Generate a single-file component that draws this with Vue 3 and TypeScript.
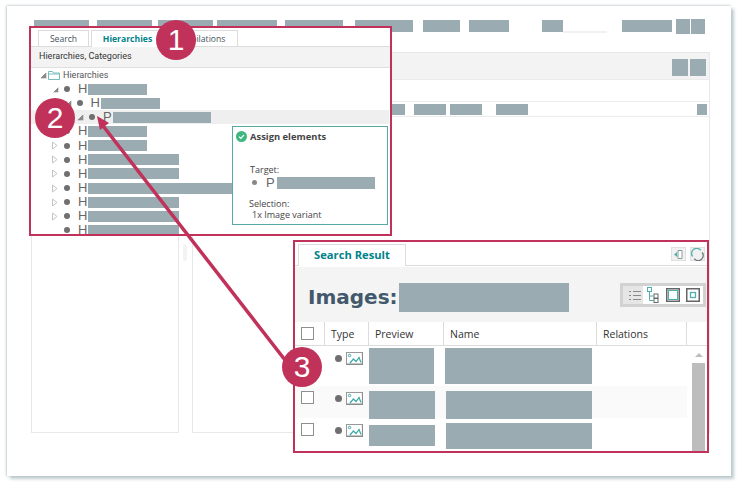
<template>
  <div class="page">
    <div class="window">
      <div class="toolbar">
        <span
          v-for="(b, i) in toolbarBlocks"
          :key="i"
          class="mask"
          :class="{ tall: b.tall }"
          :style="{ width: b.w + 'px', marginLeft: b.gap + 'px' }"
        ></span>
        <span class="slider-line"></span>
      </div>

      <div class="main">
        <div class="left-panel"></div>
        <div class="splitter"><i></i></div>
        <div class="right-panel">
          <div class="panel-head">
            <span class="mask head-btn"></span>
            <span class="mask head-btn"></span>
          </div>
          <div class="panel-spacer"></div>
          <div class="panel-cols">
            <span
              v-for="(c, i) in colBlocks"
              :key="i"
              class="mask"
              :style="{ width: c.w + 'px', marginLeft: c.gap + 'px' }"
            ></span>
          </div>
        </div>
      </div>
    </div>

    <!-- callout 1: tree -->
    <section class="callout tree-callout">
      <div class="tabs">
        <span class="tab search-tab">Search</span>
        <span class="tab active">Hierarchies</span>
        <span class="tab comp-tab">Compilations</span>
      </div>
      <div class="bar">Hierarchies, Categories</div>
      <div class="tree">
        <div class="tree-root">
          <span class="arrow open"></span>
          <svg class="folder" width="12" height="10" viewBox="0 0 12 10">
            <path d="M.5 9.5V1.5h4l1 1.5h6v6.5z" fill="#fff" stroke="#79bcbc" />
            <path d="M.5 4h11" stroke="#79bcbc" />
          </svg>
          <span>Hierarchies</span>
        </div>
        <div
          v-for="(r, i) in treeRows"
          :key="i"
          class="tree-row"
          :class="{ selected: r.selected }"
          :style="{ paddingLeft: r.indent + 'px' }"
        >
          <svg v-if="r.arrow === 'closed'" class="arrow" width="7" height="9" viewBox="0 0 7 9">
            <path d="M.5 1v7l4.5-3.5z" fill="#fff" stroke="#c4c4c4" />
          </svg>
          <span v-else class="arrow" :class="r.arrow"></span>
          <span class="dot"></span>
          <span class="letter">{{ r.letter }}</span>
          <span class="mask row-mask" :style="{ width: r.w + 'px' }"></span>
        </div>
      </div>

      <div class="assign">
        <div class="assign-title">
          <svg width="11" height="11" viewBox="0 0 11 11">
            <circle cx="5.5" cy="5.5" r="5.5" fill="#3fb77f" />
            <path d="M3 5.6l1.8 1.8L8 3.9" fill="none" stroke="#fff" stroke-width="1.3" />
          </svg>
          <b>Assign elements</b>
        </div>
        <div class="assign-label target">Target:</div>
        <div class="assign-target">
          <span class="dot"></span>
          <span class="letter">P</span>
          <span class="mask"></span>
        </div>
        <div class="assign-label selection">Selection:</div>
        <div class="assign-label variant">1x Image variant</div>
      </div>
    </section>

    <!-- callout 2: search result -->
    <section class="callout result-callout">
      <div class="result-tabs">
        <span class="result-tab">Search Result</span>
        <span class="tool-btn">
          <svg width="11" height="11" viewBox="0 0 11 11">
            <path d="M5 1.5h4v8H5z" fill="#fff" stroke="#8a9a9c" />
            <path d="M1 5.5l3-2.5v5z" fill="#4fb0ae" />
          </svg>
        </span>
        <span class="tool-btn second">
          <svg width="13" height="13" viewBox="0 0 13 13">
            <path d="M1.6 8.5A5 5 0 0 1 9.8 2.4" fill="none" stroke="#4fb0ae" stroke-width="1.3" />
            <path d="M11.2 4.5A5 5 0 0 1 3.2 10.6" fill="none" stroke="#6d7678" stroke-width="1.3" />
          </svg>
        </span>
      </div>
      <div class="result-head">
        <h1>Images:</h1>
        <span class="mask title-mask"></span>
        <div class="view-switch">
          <span class="view selected">
            <svg width="12" height="11" viewBox="0 0 12 11">
              <path d="M0 1.5h2M4 1.5h8M0 5.5h2M4 5.5h8M0 9.5h2M4 9.5h8" stroke="#8a8a8a" stroke-width="1.2" />
            </svg>
          </span>
          <span class="view">
            <svg width="12" height="16" viewBox="0 0 12 16">
              <rect x=".5" y=".5" width="4" height="4" fill="#fff" stroke="#4fb0ae" />
              <path d="M2.5 4.5v9h4M2.5 9h4" fill="none" stroke="#4fb0ae" />
              <rect x="7" y="7" width="4" height="4" fill="#fff" stroke="#666" />
              <rect x="7" y="11.5" width="4" height="4" fill="#fff" stroke="#666" />
            </svg>
          </span>
          <span class="view">
            <svg width="14" height="14" viewBox="0 0 14 14">
              <rect x=".75" y=".75" width="12.5" height="12.5" fill="#fff" stroke="#666" stroke-width="1.5" />
              <rect x="2.5" y="2.5" width="9" height="9" fill="#fff" stroke="#4fb0ae" />
            </svg>
          </span>
          <span class="view">
            <svg width="14" height="14" viewBox="0 0 14 14">
              <rect x=".75" y=".75" width="12.5" height="12.5" fill="#fff" stroke="#666" stroke-width="1.5" />
              <rect x="4.5" y="4.5" width="5" height="5" fill="#fff" stroke="#4fb0ae" stroke-width="1.3" />
            </svg>
          </span>
        </div>
      </div>

      <div class="table-head">
        <span class="th check-cell"><span class="checkbox"></span></span>
        <span class="th type-cell">Type</span>
        <span class="th preview-cell">Preview</span>
        <span class="th name-cell">Name</span>
        <span class="th rel-cell">Relations</span>
      </div>

      <div class="table-body">
        <div class="rows">
          <div
            v-for="(row, i) in resultRows"
            :key="i"
            class="row"
            :class="{ striped: i === 1 }"
            :style="{ height: row.h + 'px' }"
          >
            <span class="check-cell">
              <span v-if="row.check" class="checkbox" :style="{ marginTop: row.checkTop + 'px' }"></span>
            </span>
            <span class="type-cell type-icons" :style="{ marginTop: row.iconTop + 'px' }">
              <span class="dot big"></span>
              <svg width="17" height="13" viewBox="0 0 17 13">
                <rect x=".5" y=".5" width="16" height="12" fill="#fff" stroke="#999" />
                <path d="M.5 12.3h16.2V.5" fill="none" stroke="#8a8a8a" stroke-width="1.6" />
                <circle cx="3.5" cy="3.5" r="1.2" fill="none" stroke="#3aa9a9" />
                <path d="M4 11l3.5-4 2.5 2.5L13 5.5l2 5" fill="none" stroke="#3aa9a9" stroke-width="1.2" />
              </svg>
            </span>
            <span class="preview-cell">
              <span
                class="mask"
                :style="{ width: row.pw + 'px', height: row.ph + 'px', marginTop: row.pt + 'px' }"
              ></span>
            </span>
            <span class="name-cell">
              <span
                class="mask"
                :style="{ width: row.nw + 'px', height: row.nh + 'px', marginTop: row.nt + 'px', marginLeft: row.nl + 'px' }"
              ></span>
            </span>
          </div>
        </div>
        <div class="scrollbar">
          <span class="scroll-up"></span>
          <span class="scroll-thumb"></span>
        </div>
      </div>
    </section>

    <!-- arrow between the two callouts -->
    <svg class="arrow-line" width="741" height="487" viewBox="0 0 741 487">
      <path d="M292 369L100 122" stroke="#c1325a" stroke-width="3.5" />
      <path d="M97 116l12 7-9 7z" fill="#c1325a" />
    </svg>

    <span class="badge badge-1">1</span>
    <span class="badge badge-2">2</span>
    <span class="badge badge-3">3</span>
  </div>
</template>

<script setup lang="ts">
  interface Block {
    w: number;
    gap: number;
    tall?: boolean;
  }

  interface TreeRow {
    indent: number;
    arrow: string;
    letter: string;
    w: number;
    selected?: boolean;
  }

  interface ResultRow {
    h: number;
    check: boolean;
    checkTop: number;
    iconTop: number;
    pw: number;
    ph: number;
    pt: number;
    nw: number;
    nh: number;
    nt: number;
    nl: number;
  }

  const toolbarBlocks: Block[] = [
    { w: 55, gap: 0 },
    { w: 55, gap: 8 },
    { w: 55, gap: 6 },
    { w: 60, gap: 4 },
    { w: 58, gap: 8 },
    { w: 58, gap: 12 },
    { w: 37, gap: 10 },
    { w: 40, gap: 9 },
    { w: 21, gap: 33 },
    { w: 50, gap: 59 },
    { w: 14, gap: 4, tall: true },
    { w: 14, gap: 1, tall: true },
  ];

  const colBlocks: Block[] = [
    { w: 32, gap: 180 },
    { w: 32, gap: 9 },
    { w: 32, gap: 4 },
    { w: 32, gap: 14 },
    { w: 10, gap: 169 },
  ];

  const treeRows: TreeRow[] = [
    { indent: 21, arrow: "open", letter: "H", w: 59 },
    { indent: 33.5, arrow: "open", letter: "H", w: 59 },
    { indent: 46, arrow: "open", letter: "P", w: 98, selected: true },
    { indent: 21, arrow: "closed", letter: "H", w: 59 },
    { indent: 21, arrow: "closed", letter: "H", w: 59 },
    { indent: 21, arrow: "closed", letter: "H", w: 91 },
    { indent: 21, arrow: "closed", letter: "H", w: 91 },
    { indent: 21, arrow: "closed", letter: "H", w: 144 },
    { indent: 21, arrow: "closed", letter: "H", w: 91 },
    { indent: 21, arrow: "closed", letter: "H", w: 91 },
    { indent: 21, arrow: "none", letter: "H", w: 91 },
  ];

  const resultRows: ResultRow[] = [
    { h: 40, check: false, checkTop: 0, iconTop: 6, pw: 65, ph: 36, pt: 2, nw: 147, nh: 36, nt: 2, nl: 1 },
    { h: 32, check: true, checkTop: 5, iconTop: 6, pw: 66, ph: 28, pt: 5, nw: 146, nh: 28, nt: 5, nl: 2 },
    { h: 36, check: true, checkTop: 5, iconTop: 6, pw: 66, ph: 21, pt: 7, nw: 146, nh: 26, nt: 5, nl: 2 },
  ];
</script>

<style>
  html,
  body {
    margin: 0;
    background: #fff;
  }
</style>

<style scoped>
  .page {
    position: relative;
    width: 741px;
    height: 487px;
    overflow: hidden;
    padding: 6px 0 0 7px;
    box-sizing: border-box;
    font-family: "Open Sans", "Noto Sans", sans-serif;
    color: #444;
  }

  .window {
    width: 724px;
    height: 470px;
    background: #fff;
    box-sizing: border-box;
    padding: 14px 0 0 27px;
    box-shadow:
      3px 3px 3px rgba(160, 178, 184, 0.65),
      -1px 0 2px rgba(160, 178, 184, 0.6),
      0 -1px 2px rgba(160, 178, 184, 0.3);
  }

  .mask {
    display: block;
    flex: none;
    background: #9aabb1;
  }

  .toolbar {
    position: relative;
    display: flex;
    align-items: center;
    height: 12px;
  }

  .toolbar .mask {
    height: 12px;
  }

  .toolbar .mask.tall {
    height: 15px;
  }

  .slider-line {
    position: absolute;
    left: 529px;
    top: 11px;
    width: 44px;
    height: 2px;
    background: #f1f1f1;
  }

  .main {
    display: flex;
    margin: 20px 0 0 -3px;
    height: 381px;
  }

  .left-panel {
    width: 148px;
    box-sizing: border-box;
    border: 1px solid #e8e8e8;
  }

  .splitter {
    position: relative;
    width: 13px;
  }

  .splitter i {
    position: absolute;
    left: 4px;
    top: 192px;
    width: 4px;
    height: 17px;
    background: #f3f3f3;
    border-radius: 2px;
  }

  .right-panel {
    width: 518px;
    box-sizing: border-box;
    border: 1px solid #e8e8e8;
  }

  .panel-head {
    display: flex;
    justify-content: flex-end;
    align-items: flex-start;
    gap: 2px;
    height: 27px;
    padding: 6px 3px 0 0;
    box-sizing: border-box;
    background: #f3f3f3;
    border-bottom: 1px solid #ebebeb;
  }

  .head-btn {
    width: 16px;
    height: 17px;
  }

  .panel-spacer {
    height: 21px;
  }

  .panel-cols {
    display: flex;
    align-items: center;
    height: 14px;
    border-top: 1px solid #ececec;
    border-bottom: 1px solid #ececec;
  }

  .panel-cols .mask {
    height: 11px;
  }

  .callout {
    position: absolute;
    box-sizing: border-box;
    border: 2px solid #c1325a;
    background: #fff;
    overflow: hidden;
  }

  .tree-callout {
    left: 29px;
    top: 26px;
    width: 363px;
    height: 210px;
  }

  .tabs {
    display: flex;
    align-items: flex-end;
    height: 19px;
    padding-left: 7px;
    border-bottom: 1px solid #dcdcdc;
    box-sizing: border-box;
    position: relative;
  }

  .tab {
    display: flex;
    align-items: center;
    justify-content: center;
    height: 16px;
    box-sizing: border-box;
    border: 1px solid #dcdcdc;
    border-bottom: none;
    font-size: 8.6px;
    color: #45525a;
    margin-right: 2px;
  }

  .search-tab {
    width: 51px;
  }

  .tab.active {
    width: 73px;
    height: 17px;
    margin-bottom: -1px;
    background: #fff;
    color: #00838a;
    font-weight: 700;
  }

  .comp-tab {
    width: 78px;
    margin-right: 0;
    margin-left: -6px;
  }

  .bar {
    height: 21px;
    padding-left: 8px;
    box-sizing: border-box;
    background: #f3f3f3;
    border-bottom: 1px solid #dfdfdf;
    font-family: Roboto, sans-serif;
    font-size: 9px;
    line-height: 19px;
    color: #333;
  }

  .tree {
    font-family: Roboto, sans-serif;
    font-size: 9px;
  }

  .tree-root {
    display: flex;
    align-items: center;
    height: 14px;
    padding-left: 9px;
    color: #555;
  }

  .folder {
    margin: 0 3px 0 1px;
  }

  .arrow {
    flex: none;
    width: 7px;
    height: 7px;
    box-sizing: border-box;
  }

  svg.arrow {
    height: 9px;
  }

  .arrow.open {
    background: linear-gradient(135deg, transparent 50%, #8b8b8b 50%);
    transform: scale(0.8);
  }

  .tree-row {
    display: flex;
    align-items: center;
    height: 14.15px;
    margin-right: 1px;
    box-sizing: border-box;
  }

  .tree-row.selected {
    background: #efefef;
  }

  .dot {
    flex: none;
    width: 6px;
    height: 6px;
    border-radius: 50%;
    background: #6f6f6f;
    margin-left: 5px;
  }

  .letter {
    flex: none;
    width: 10px;
    margin-left: 8px;
    font-family: "Liberation Sans", Arial, sans-serif;
    font-size: 13px;
    line-height: 14px;
    color: #666;
  }

  .row-mask {
    height: 11px;
  }

  .assign {
    position: absolute;
    left: 201px;
    top: 98px;
    width: 156px;
    height: 99px;
    box-sizing: border-box;
    border: 1px solid #5aa9a5;
    background: #fff;
    font-size: 9px;
    color: #444;
  }

  .assign-title {
    display: flex;
    align-items: center;
    gap: 3px;
    padding: 3px 0 0 3px;
    font-size: 9.4px;
  }

  .assign-title b {
    font-weight: 700;
  }

  .assign-label {
    padding-left: 17px;
    line-height: 11px;
  }

  .target {
    margin-top: 21px;
  }

  .assign-target {
    display: flex;
    align-items: center;
    height: 13px;
    padding-left: 13px;
    margin-top: 1px;
  }

  .assign-target .dot {
    margin-left: 6px;
    width: 5px;
    height: 5px;
    background: #888;
  }

  .assign-target .letter {
    width: 11px;
    margin-left: 9px;
  }

  .assign-target .mask {
    width: 98px;
    height: 12px;
  }

  .selection {
    margin-top: 9px;
    padding-left: 16px;
  }

  .variant {
    padding-left: 19px;
  }

  .result-callout {
    left: 293px;
    top: 240px;
    width: 416px;
    height: 213px;
  }

  .result-tabs {
    display: flex;
    align-items: flex-end;
    height: 24px;
    padding-left: 3px;
    box-sizing: border-box;
    border-bottom: 1px solid #dcdcdc;
  }

  .result-tab {
    width: 108px;
    height: 22px;
    margin-bottom: -1px;
    box-sizing: border-box;
    border: 1px solid #dcdcdc;
    border-bottom: none;
    background: #fff;
    text-align: center;
    font: 700 11.2px/19px "Open Sans", sans-serif;
    color: #00838a;
    position: relative;
  }

  .tool-btn {
    width: 15px;
    height: 14px;
    margin: 0 0 4px 265px;
    box-sizing: border-box;
    display: flex;
    align-items: center;
    justify-content: center;
    background: #f1f1f1;
    border: 1px solid #e0e0e0;
  }

  .tool-btn.second {
    margin-left: 4px;
  }

  .result-head {
    display: flex;
    align-items: flex-start;
    height: 55px;
    margin-top: 1px;
    background: #f4f4f4;
    box-sizing: border-box;
    padding: 16px 1px 0 13px;
  }

  h1 {
    margin: 0;
    font: 700 20px/29px "DejaVu Sans", sans-serif;
    color: #43586a;
    width: 91px;
  }

  .title-mask {
    width: 170px;
    height: 29px;
  }

  .view-switch {
    display: flex;
    align-items: center;
    margin-left: auto;
    width: 86px;
    height: 24px;
    box-sizing: border-box;
    border: 3px solid #d2d2d2;
    background: #fff;
  }

  .view {
    display: flex;
    align-items: center;
    justify-content: center;
    width: 20px;
    height: 18px;
  }

  .view.selected {
    background: #e6e6e6;
    padding-left: 3px;
    box-sizing: border-box;
  }

  .table-head {
    display: flex;
    height: 23px;
    border-bottom: 1px solid #dcdcdc;
    font-size: 10.5px;
    color: #333;
  }

  .check-cell {
    flex: none;
    width: 30px;
    padding-left: 6px;
    box-sizing: border-box;
  }

  .type-cell {
    flex: none;
    width: 44px;
    box-sizing: border-box;
  }

  .preview-cell {
    flex: none;
    width: 75px;
    box-sizing: border-box;
  }

  .name-cell {
    flex: none;
    width: 153px;
    box-sizing: border-box;
  }

  .rel-cell {
    flex: none;
    width: 90px;
    box-sizing: border-box;
  }

  .th {
    display: flex;
    align-items: center;
    border-right: 1px solid #dcdcdc;
    padding-left: 6px;
  }

  .th.check-cell {
    padding-left: 6px;
  }

  .checkbox {
    display: block;
    width: 13px;
    height: 13px;
    box-sizing: border-box;
    border: 1px solid #8f8f8f;
    background: #fff;
  }

  .table-body {
    display: flex;
  }

  .rows {
    width: 392px;
    flex: none;
  }

  .row {
    display: flex;
    align-items: flex-start;
    box-sizing: border-box;
  }

  .row.striped {
    background: #fafafa;
  }

  .type-icons {
    display: flex;
    align-items: center;
    padding-left: 9px;
    gap: 4px;
  }

  .dot.big {
    width: 7px;
    height: 7px;
    margin-left: 1px;
  }

  .scrollbar {
    flex: none;
    width: 13px;
    margin-left: 5px;
    display: flex;
    flex-direction: column;
    align-items: center;
  }

  .scroll-up {
    width: 0;
    height: 0;
    margin-top: 7px;
    border-style: solid;
    border-width: 0 4px 4px;
    border-color: transparent transparent #bdbdbd;
  }

  .scroll-thumb {
    width: 13px;
    height: 90px;
    margin-top: 6px;
    background: #bdbdbd;
  }

  .arrow-line {
    position: absolute;
    left: 0;
    top: 0;
    pointer-events: none;
  }

  .badge {
    position: absolute;
    width: 40px;
    height: 40px;
    border-radius: 50%;
    background: #c1325a;
    color: #fff;
    font: 400 30px/40px "Liberation Sans", Arial, sans-serif;
    text-align: center;
  }

  .badge-1 {
    left: 156px;
    top: 20px;
  }

  .badge-2 {
    left: 35px;
    top: 98px;
  }

  .badge-3 {
    left: 282px;
    top: 347px;
  }
</style>
